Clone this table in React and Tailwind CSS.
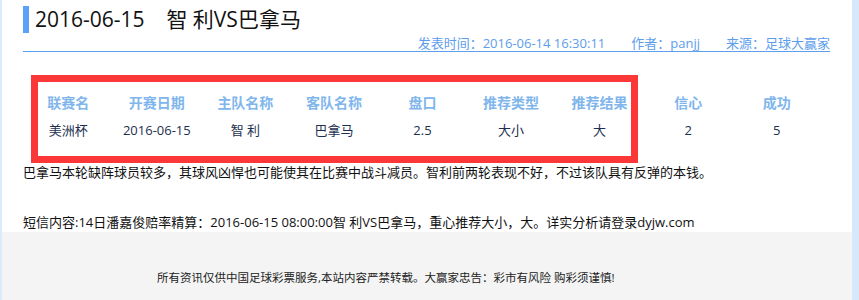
const columns = [
  { head: "联赛名", value: "美洲杯" },
  { head: "开赛日期", value: "2016-06-15" },
  { head: "主队名称", value: "智 利" },
  { head: "客队名称", value: "巴拿马" },
  { head: "盘口", value: "2.5" },
  { head: "推荐类型", value: "大小" },
  { head: "推荐结果", value: "大" },
  { head: "信心", value: "2" },
  { head: "成功", value: "5" },
];

const font = { fontFamily: '"Open Sans", "Noto Sans CJK SC", sans-serif' };

export default function App() {
  return (
    <div className="flex h-[300px] w-[859px] bg-white" style={font}>
      <div className="w-[2px] shrink-0 bg-[#dcebfc]" />

      <main className="relative flex w-[850px] flex-col">
        {/* article heading */}
        <div className="px-[21px]">
          <div className="flex h-[39px] items-start pt-[6px]">
            <span className="h-[27px] w-[6px] bg-[#5aa2f7]" />
            <h1 className="ml-[6px] text-[21px] leading-[27px] text-[#111]">
              2016-06-15&nbsp;&nbsp;&nbsp;&nbsp;智 利VS巴拿马
            </h1>
          </div>
          <div className="mr-[1px] flex h-[13px] items-end justify-end gap-[26px] border-b border-[#5aa0ee] pb-[1px] text-[13px] leading-[13px] text-[#5d9ded]">
            <span>发表时间：2016-06-14 16:30:11</span>
            <span>作者：panjj</span>
            <span>来源：足球大赢家</span>
          </div>
        </div>

        {/* match table */}
        <div className="ml-[22px] mt-[36px] grid w-[797px] grid-cols-9 text-center">
          {columns.map((c) => (
            <div key={c.head} className="flex flex-col items-center">
              <span className="flex h-[28px] items-center text-[14px] font-bold text-[#80b6ec]">{c.head}</span>
              <span className="flex h-[30px] items-center text-[13px] text-[#1d2f4f]">{c.value}</span>
            </div>
          ))}
        </div>

        <p className="ml-[21px] mt-[17px] text-[13px] leading-[18px] text-[#111]">
          巴拿马本轮缺阵球员较多，其球风凶悍也可能使其在比赛中战斗减员。智利前两轮表现不好，不过该队具有反弹的本钱。
        </p>
        <p className="ml-[21px] mt-[32px] text-[13px] leading-[18px] text-[#111]">
          短信内容:14日潘嘉俊赔率精算：2016-06-15 08:00:00智 利VS巴拿马，重心推荐大小，大。详实分析请登录dyjw.com
        </p>

        <footer className="mt-auto h-[68px] bg-[#f4f4f4] pl-[155px] pt-[39px] text-[11.5px] leading-[14px] text-[#222]">
          所有资讯仅供中国足球彩票服务,本站内容严禁转载。大赢家忠告：彩市有风险 购彩须谨慎!
        </footer>

        {/* highlight frame */}
        <div className="pointer-events-none absolute left-[29px] top-[75px] h-[88px] w-[607px] border-[7px] border-[#fc3737]" />
      </main>

      <div className="w-[7px] shrink-0 bg-[#d5e8fc]" />
    </div>
  );
}
